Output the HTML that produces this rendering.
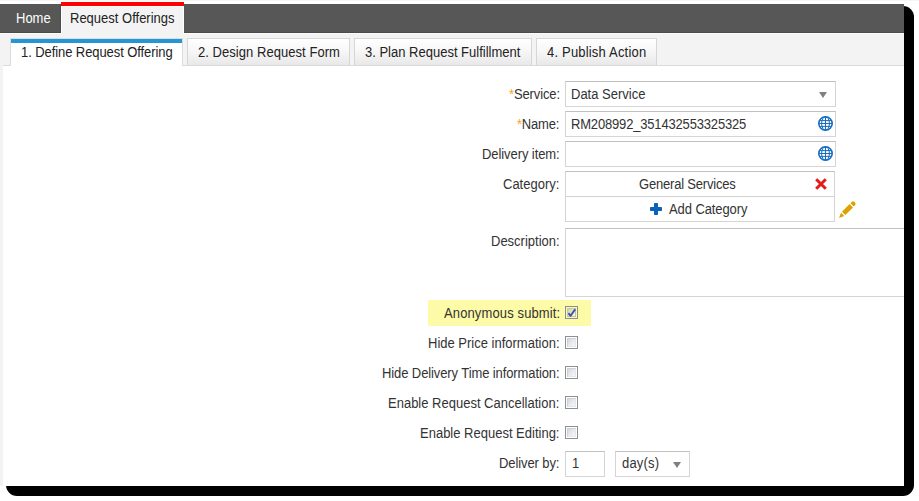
<!DOCTYPE html>
<html><head><meta charset="utf-8">
<style>
*{box-sizing:border-box;margin:0;padding:0}
html,body{width:919px;height:501px;overflow:hidden;background:#fff}
body{position:relative;font-family:"Liberation Sans",sans-serif;font-size:13px;color:#222}
.a{position:absolute}
.t{position:absolute;line-height:15px;white-space:nowrap;transform:scaleY(1.08);transform-origin:0 0}
.req{color:#f7a21b}
.inp{position:absolute;border:1px solid #d5d5d5;border-top-color:#c0c0c0;background:#fff}
.cb{position:absolute;width:13px;height:13px;border:1px solid #8d9090;background:#fff}
.cb i{position:absolute;left:1px;top:1px;width:9px;height:9px;border:1px solid #cdd0d8;border-right-color:#e6e7ea;border-bottom-color:#e6e7ea;background:linear-gradient(135deg,#d3d6de 0%,#e8e9ee 50%,#f7f7f7 100%)}
.tab{position:absolute;top:38px;height:28px;border:1px solid #d6d6d6;border-bottom:none;background:linear-gradient(#ffffff 0%,#f6f6f6 50%,#e8e8e8 100%)}
.arr{position:absolute;width:0;height:0;border-left:4.5px solid transparent;border-right:4.5px solid transparent;border-top:6px solid #808080}
svg{position:absolute;overflow:visible}
</style></head><body>
<div class="a" style="left:0;top:0;width:919px;height:1px;background:#f6f6f6"></div>
<div class="a" style="left:6px;top:6px;width:908px;height:490px;background:#000;border-radius:11px"></div>
<div class="a" style="left:0;top:4px;width:904px;height:482px;background:#fff;overflow:hidden">
  <div class="a" style="left:0;top:0;width:904px;height:29px;background:#575757;border-bottom:1px solid #4b4b4b"></div>
  <div class="a" style="left:0;top:29px;width:904px;height:1px;background:#fbfbfb"></div>
  <div class="a" style="left:0;top:30px;width:904px;height:32px;background:#f3f3f3;border-bottom:1px solid #dadada"></div>
  <div class="a" style="left:0;top:61px;width:3px;height:421px;background:#f3f3f3"></div>
  <div class="inp" style="left:565px;top:224px;width:360px;height:69px"></div>
</div>
<!-- top nav -->
<div class="a" style="left:60px;top:4px;width:1px;height:29px;background:#4b4b4b"></div>
<div class="a" style="left:61px;top:2px;width:123px;height:4px;background:#ff0000"></div><div class="a" style="left:61px;top:6px;width:123px;height:28px;background:#f3f3f3;border:1px solid #fff;border-bottom:none"></div>
<div class="t" style="left:16.00px;top:10px;letter-spacing:0.000px;color:#fff">Home</div>
<div class="t" style="left:70.00px;top:10px;letter-spacing:0.000px;color:#222">Request Offerings</div>
<!-- sub tabs -->
<div class="tab" style="left:10px;width:173px;background:#fff;border-color:#dcdcdc"><div class="a" style="left:0;top:0;width:171px;height:4px;background:#2596d5"></div></div>
<div class="tab" style="left:187px;width:163px;height:27px"></div>
<div class="tab" style="left:354px;width:178px;height:27px"></div>
<div class="tab" style="left:536px;width:121px;height:27px"></div>
<div class="t" style="left:21.00px;top:44px;letter-spacing:-0.080px;color:#222">1. Define Request Offering</div>
<div class="t" style="left:198.00px;top:44px;letter-spacing:0.048px;color:#222">2. Design Request Form</div>
<div class="t" style="left:365.00px;top:44px;letter-spacing:0.000px;color:#222">3. Plan Request Fulfillment</div>
<div class="t" style="left:547.00px;top:44px;letter-spacing:0.188px;color:#222">4. Publish Action</div>
<!-- form -->
<div class="inp" style="left:565px;top:81px;width:271px;height:26px"></div>
<div class="arr" style="left:819px;top:92px"></div>
<div class="inp" style="left:565px;top:111px;width:271px;height:26px"></div>
<div class="inp" style="left:565px;top:141px;width:271px;height:26px"></div>
<svg style="left:818px;top:116px" width="15" height="15" viewBox="0 0 15 15"><g fill="none" stroke="#176dc1"><circle cx="7.5" cy="7.5" r="6.7" stroke-width="1.6"/><ellipse cx="7.5" cy="7.5" rx="3.9" ry="6.7" stroke-width="1"/><path d="M7.5 1V14M1 7.5H14M1.6 4.6H13.4M1.6 10.4H13.4" stroke-width="1"/></g></svg>
<svg style="left:818px;top:146px" width="15" height="15" viewBox="0 0 15 15"><g fill="none" stroke="#176dc1"><circle cx="7.5" cy="7.5" r="6.7" stroke-width="1.6"/><ellipse cx="7.5" cy="7.5" rx="3.9" ry="6.7" stroke-width="1"/><path d="M7.5 1V14M1 7.5H14M1.6 4.6H13.4M1.6 10.4H13.4" stroke-width="1"/></g></svg>
<div class="inp" style="left:565px;top:171px;width:270px;height:51px"></div>
<div class="a" style="left:566px;top:196px;width:268px;height:1px;background:#d3d3d3"></div>
<svg style="left:815px;top:178px" width="12" height="12" viewBox="0 0 12 12"><path d="M1.2 1.2L10.8 10.8M10.8 1.2L1.2 10.8" stroke="#e31b1b" stroke-width="3"/></svg>
<svg style="left:650px;top:203px" width="12" height="12" viewBox="0 0 12 12"><g fill="#0b63b9"><rect x="4" y="0" width="4" height="12" rx="0.7"/><rect x="0" y="4" width="12" height="4" rx="0.7"/></g></svg>
<svg style="left:838px;top:201px" width="18" height="18" viewBox="0 0 18 18"><g transform="rotate(-45 1 17)" fill="#dca203"><path d="M1 17L6.2 14.6V19.4Z"/><rect x="7.6" y="14.6" width="10.8" height="4.8"/><path d="M19.6 14.6H21A2.4 2.4 0 0 1 21 19.4H19.6Z"/></g></svg>
<div class="t" style="left:509.00px;top:86px;letter-spacing:-0.125px;color:#333"><span class="req">*</span>Service:</div>
<div class="t" style="left:517.00px;top:116px;letter-spacing:-0.200px;color:#333"><span class="req">*</span>Name:</div>
<div class="t" style="left:482.00px;top:146px;letter-spacing:-0.077px;color:#333">Delivery item:</div>
<div class="t" style="left:503.00px;top:176px;letter-spacing:0.000px;color:#333">Category:</div>
<div class="t" style="left:491.00px;top:233px;letter-spacing:0.000px;color:#333">Description:</div>
<div class="t" style="left:571.00px;top:86px;letter-spacing:0.000px;color:#333">Data Service</div>
<div class="t" style="left:571.00px;top:116px;letter-spacing:-0.174px;color:#333">RM208992_351432553325325</div>
<div class="t" style="left:639.00px;top:176px;letter-spacing:-0.200px;color:#333">General Services</div>
<div class="t" style="left:669.00px;top:201px;letter-spacing:-0.091px;color:#333">Add Category</div>
<!-- checkboxes -->
<div class="a" style="left:428px;top:300px;width:163px;height:26px;background:#fdfaa8"></div>
<div class="cb" style="left:565px;top:306px;background:transparent;border-color:#8a8f96"><i style="background:linear-gradient(135deg,rgba(150,160,185,.45) 0%,rgba(190,195,200,.3) 50%,rgba(255,255,255,.4) 100%);border-color:rgba(150,160,185,.5)"></i><svg style="left:0;top:0" width="11" height="11" viewBox="0 0 11 11"><path d="M2.4 6.2L4.6 8.8L9.2 2.2" fill="none" stroke="#3a4fae" stroke-width="1.9" stroke-linejoin="round"/></svg></div>
<div class="cb" style="left:565px;top:336px"><i></i></div>
<div class="cb" style="left:565px;top:366px"><i></i></div>
<div class="cb" style="left:565px;top:396px"><i></i></div>
<div class="cb" style="left:565px;top:426px"><i></i></div>
<div class="t" style="left:444.00px;top:305px;letter-spacing:0.125px;color:#333">Anonymous submit:</div>
<div class="t" style="left:428.00px;top:335px;letter-spacing:0.000px;color:#333">Hide Price information:</div>
<div class="t" style="left:382.00px;top:365px;letter-spacing:-0.100px;color:#333">Hide Delivery Time information:</div>
<div class="t" style="left:388.00px;top:395px;letter-spacing:0.000px;color:#333">Enable Request Cancellation:</div>
<div class="t" style="left:420.00px;top:425px;letter-spacing:0.000px;color:#333">Enable Request Editing:</div>
<div class="t" style="left:499.00px;top:455px;letter-spacing:-0.100px;color:#333">Deliver by:</div>
<div class="inp" style="left:565px;top:451px;width:40px;height:26px"></div>
<div class="inp" style="left:615px;top:451px;width:75px;height:26px"></div>
<div class="arr" style="left:673px;top:462px"></div>
<div class="t" style="left:572.00px;top:455px;letter-spacing:0.000px;color:#333">1</div>
<div class="t" style="left:622.00px;top:455px;letter-spacing:0.200px;color:#333">day(s)</div>
</body></html>
